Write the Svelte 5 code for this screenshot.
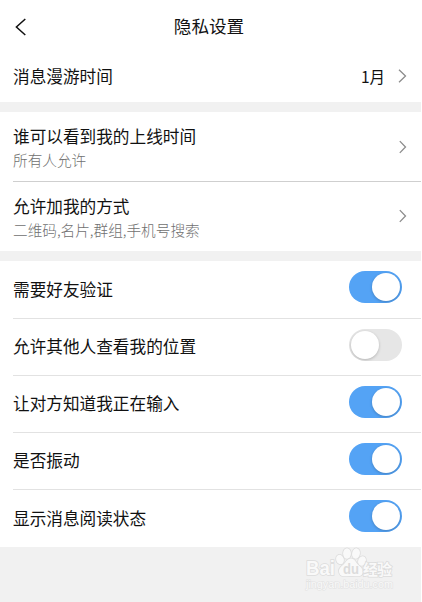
<script>
  const options = [
    { title: '谁可以看到我的上线时间', value: '所有人允许' },
    { title: '允许加我的方式', value: '二维码,名片,群组,手机号搜索' }
  ];
  let switches = $state([
    { label: '需要好友验证', on: true },
    { label: '允许其他人查看我的位置', on: false },
    { label: '让对方知道我正在输入', on: true },
    { label: '是否振动', on: true },
    { label: '显示消息阅读状态', on: true }
  ]);
</script>

{#snippet chevron(tall)}
  <svg class="chevron" width="9" height="16" viewBox="0 0 9 16" fill="none" stroke="#8c8c8c" stroke-width="1.3">
    <path d={tall ? 'M1 1.7 7.5 8 1 14.3' : 'M1.8 2.1 7.5 8 1.8 13.9'} />
  </svg>
{/snippet}

<main class="screen">
  <header>
    <svg class="back" width="12" height="18" viewBox="0 0 12 18" fill="none" stroke="#111" stroke-width="1.5">
      <path d="M10.3 1 1.4 9 10.3 17" />
    </svg>
    <h1>隐私设置</h1>
  </header>

  <section>
    <div class="row roaming">
      <span class="label">消息漫游时间</span>
      <span class="month">1月</span>
      {@render chevron(true)}
    </div>
  </section>

  <section class="group options">
    {#each options as option}
      <div class="row option">
        <div class="texts">
          <span class="label">{option.title}</span>
          <span class="sub">{option.value}</span>
        </div>
        {@render chevron(false)}
      </div>
    {/each}
  </section>

  <section class="group">
    {#each switches as item}
      <div class="row setting">
        <span class="label">{item.label}</span>
        <button class="toggle" class:on={item.on} aria-label={item.label} onclick={() => (item.on = !item.on)}>
          <span class="knob"></span>
        </button>
      </div>
    {/each}
  </section>

  <footer>
    <svg class="mark" width="94" height="56" viewBox="0 0 94 56">
      <g class="outlined">
        <text x="2" y="28" font-size="20" font-weight="700" textLength="29" lengthAdjust="spacingAndGlyphs">Bai</text>
        <ellipse cx="36" cy="12.5" rx="3.8" ry="4.8" transform="rotate(-18 36 12.5)" />
        <ellipse cx="43" cy="6.5" rx="3.9" ry="5.2" />
        <ellipse cx="52" cy="6.5" rx="3.9" ry="5.2" transform="rotate(12 52 6.5)" />
        <ellipse cx="58" cy="14" rx="3.8" ry="4.8" transform="rotate(22 58 14)" />
        <path d="M47 11.5c-4 0-5 4-8 6.500-3 2-5 5-3.500 8.500 1.500 4 6 2.500 11.500 2.500s10 1.500 11.500-2.500c1.200-3.500-1-6-4-8.500C51.500 15.500 51 11.500 47 11.500Z" />
        <text class="cjk" x="59" y="27.5" font-size="15" font-weight="700" textLength="29">经验</text>
        <text class="url" x="2" y="41" font-size="11.5" textLength="87" lengthAdjust="spacingAndGlyphs">jingyan.baidu.com</text>
      </g>
      <text x="39" y="26.5" font-size="14" font-weight="700" fill="#dcdcdc" textLength="16" lengthAdjust="spacingAndGlyphs">du</text>
    </svg>
  </footer>
</main>

<style>
  :global(body) {
    margin: 0;
    background: #fff;
  }
  .screen {
    box-sizing: border-box;
    width: 421px;
    height: 602px;
    display: flex;
    flex-direction: column;
    background: #f1f1f1;
    color: #111;
    font-family: "Noto Sans CJK SC", sans-serif;
    overflow: hidden;
  }
  header {
    display: grid;
    grid-template-columns: 40px 1fr 43px;
    align-items: center;
    height: 54px;
    background: #fff;
  }
  .back {
    margin-left: 15px;
  }
  h1 {
    margin: 0;
    padding-bottom: 2px;
    font-size: 17.6px;
    line-height: 26px;
    font-weight: 400;
    text-align: center;
  }
  section {
    background: #fff;
  }
  .group {
    margin-top: 10px;
  }
  .row {
    box-sizing: border-box;
    display: flex;
    align-items: center;
    margin-left: 13px;
    padding-right: 14px;
  }
  .label {
    font-size: 16.65px;
    line-height: 24px;
    white-space: nowrap;
  }
  .roaming {
    height: 48px;
    padding-bottom: 4px;
  }
  .month {
    margin-left: auto;
    margin-right: 13px;
    font-size: 15.5px;
    line-height: 22px;
  }
  .option {
    height: 69px;
    justify-content: space-between;
  }
  .option + .option {
    height: 70px;
    padding-bottom: 1px;
    border-top: 1px solid #cfcfcf;
  }
  .texts {
    display: flex;
    flex-direction: column;
    padding-top: 2px;
  }
  .sub {
    font-size: 14.65px;
    line-height: 23px;
    color: #6f6f6f;
    font-weight: 300;
  }
  .setting {
    height: 57px;
    justify-content: space-between;
    padding: 0 19px 5px 0;
  }
  .setting .label {
    padding-top: 3px;
  }
  .setting + .setting {
    border-top: 1px solid #e2e2e2;
  }
  .setting:last-child {
    height: 58px;
    padding-bottom: 6px;
  }
  .setting:last-child .label {
    padding-top: 5px;
  }
  .toggle {
    box-sizing: border-box;
    display: flex;
    align-items: center;
    width: 53px;
    height: 32px;
    padding: 2px;
    border: 0;
    border-radius: 16px;
    background: #e6e6e6;
    overflow: hidden;
  }
  .toggle.on {
    justify-content: flex-end;
    background: #54a3f5;
  }
  .knob {
    width: 28px;
    height: 28px;
    border-radius: 50%;
    background: #fff;
    box-shadow: 0 1px 3px rgba(0, 0, 0, 0.22);
  }
  footer {
    position: relative;
    flex: 1;
  }
  .mark {
    position: absolute;
    left: 304px;
    top: 0;
    overflow: visible;
    font-family: "Liberation Sans", sans-serif;
  }
  .outlined {
    fill: #f9f9f9;
    stroke: #dcdcdc;
    stroke-width: 1.6px;
    paint-order: stroke;
  }
  .outlined .url {
    stroke: #e2e2e2;
    stroke-width: 1.2px;
  }
  .cjk {
    font-family: "Noto Sans CJK SC", sans-serif;
  }
</style>
